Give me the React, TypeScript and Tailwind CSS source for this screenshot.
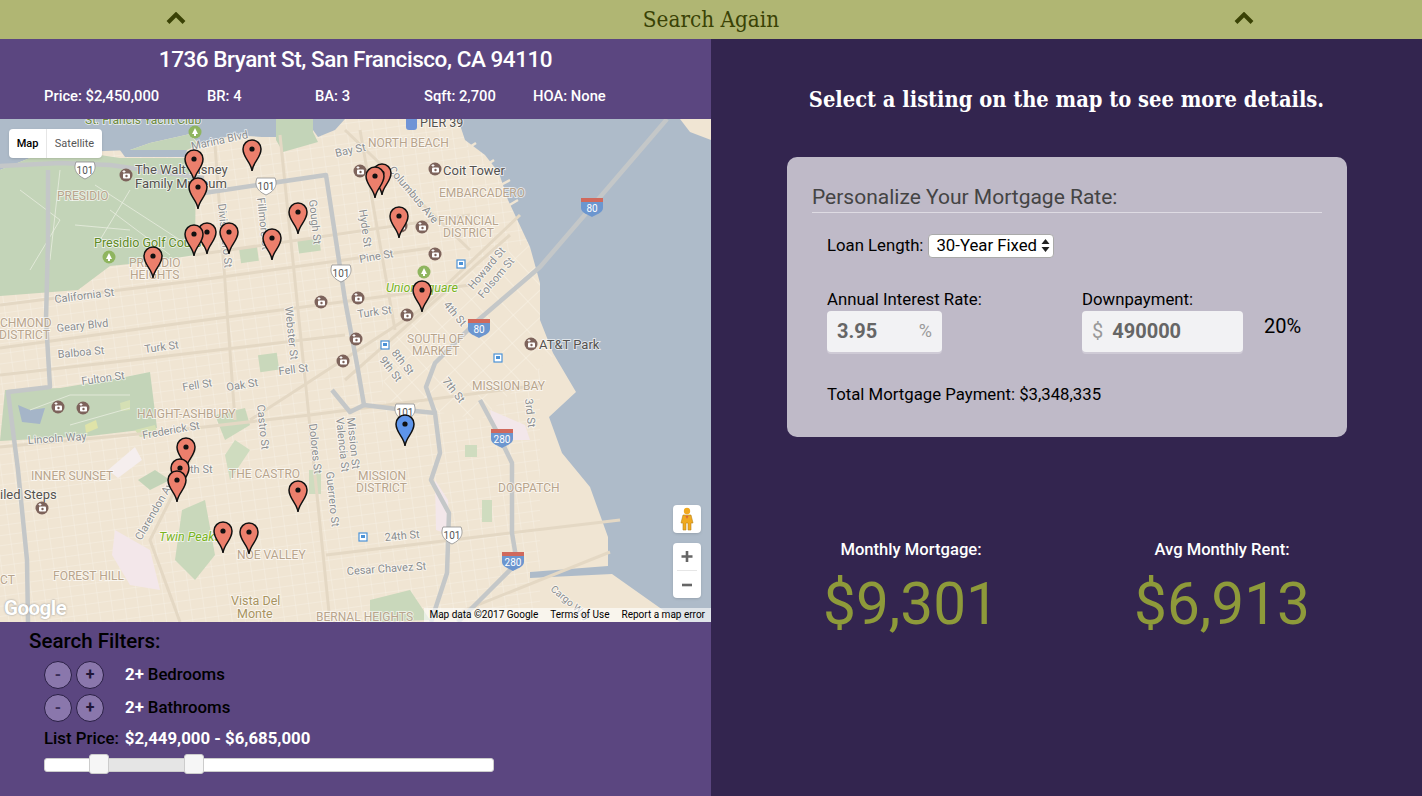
import React from "react";

type Label = [string, number, number, number?, string?, number?, string?];

const STREET = "#8b8e90";
const AREA = "#b8a48c";
const POI = "#55524f";
const GREEN = "#5f8a25";
const LIME = "#79b41e";

const labels: Label[] = [
  ["St. Francis Yacht Club", 85, 124, 0, "#6d8a3d", 12],
  ["Marina Blvd", 192, 150, -12, STREET, 11],
  ["NORTH BEACH", 368, 147, 0, AREA, 12],
  ["PIER 39", 420, 127, 0, POI, 12.5],
  ["Bay St", 336, 157, -12, STREET, 11],
  ["The Walt Disney", 135, 174, 0, POI, 13],
  ["Family Museum", 135, 188, 0, POI, 13],
  ["Coit Tower", 443, 175, 0, POI, 13],
  ["EMBARCADERO", 439, 197, 0, AREA, 12],
  ["PRESIDIO", 57, 200, 0, AREA, 12],
  ["Columbus Ave", 388, 170, 50, STREET, 11],
  ["FINANCIAL", 438, 225, 0, AREA, 12],
  ["DISTRICT", 443, 237, 0, AREA, 12],
  ["Hyde St", 359, 210, 82, STREET, 11],
  ["Divisadero St", 218, 204, 84, STREET, 11],
  ["Fillmore St", 257, 198, 84, STREET, 11],
  ["Gough St", 309, 200, 84, STREET, 11],
  ["Presidio Golf Course", 94, 247, 0, GREEN, 12.5],
  ["PRESIDIO", 129, 267, 0, AREA, 12],
  ["HEIGHTS", 130, 279, 0, AREA, 12],
  ["Pine St", 360, 263, -10, STREET, 11],
  ["Union Square", 386, 292, 0, LIME, 12.5, "italic"],
  ["California St", 55, 303, -7, STREET, 11],
  ["Howard St", 473, 290, -50, STREET, 11],
  ["Folsom St", 483, 299, -50, STREET, 11],
  ["Turk St", 358, 318, -8, STREET, 11],
  ["Turk St", 145, 353, -8, STREET, 11],
  ["4th St", 443, 305, 50, STREET, 11],
  ["Webster St", 285, 307, 84, STREET, 11],
  ["CHMOND", 0, 327, 0, AREA, 12],
  ["DISTRICT", -1, 339, 0, AREA, 12],
  ["Geary Blvd", 57, 332, -6, STREET, 11],
  ["Balboa St", 58, 358, -5, STREET, 11],
  ["Fulton St", 82, 385, -8, STREET, 11],
  ["Fell St", 183, 391, -9, STREET, 11],
  ["Oak St", 227, 391, -9, STREET, 11],
  ["Fell St", 279, 375, -7, STREET, 11],
  ["SOUTH OF", 407, 343, 0, AREA, 12],
  ["MARKET", 412, 355, 0, AREA, 12],
  ["AT&T Park", 539, 349, 0, POI, 13],
  ["8th St", 391, 353, 52, STREET, 11],
  ["9th St", 379, 360, 52, STREET, 11],
  ["7th St", 442, 381, 52, STREET, 11],
  ["MISSION BAY", 472, 390, 0, AREA, 12],
  ["HAIGHT-ASHBURY", 137, 418, 0, AREA, 12],
  ["Castro St", 257, 405, 84, STREET, 11],
  ["Dolores St", 309, 424, 84, STREET, 11],
  ["Valencia St", 336, 418, 84, STREET, 11],
  ["Mission St", 347, 418, 84, STREET, 11],
  ["3rd St", 525, 399, 84, STREET, 11],
  ["Frederick St", 143, 439, -10, STREET, 11],
  ["Lincoln Way", 28, 444, -4, STREET, 11],
  ["INNER SUNSET", 31, 480, 0, AREA, 12],
  ["th St", 190, 473, 0, STREET, 11],
  ["THE CASTRO", 229, 478, 0, AREA, 12],
  ["MISSION", 358, 480, 0, AREA, 12],
  ["DISTRICT", 356, 492, 0, AREA, 12],
  ["DOGPATCH", 498, 492, 0, AREA, 12],
  ["Guerrero St", 326, 472, 84, STREET, 11],
  ["iled Steps", 0, 499, 0, POI, 13],
  ["Clarendon Ave", 141, 541, -60, STREET, 11],
  ["Twin Peaks", 159, 541, 0, LIME, 12.5, "italic"],
  ["NOE VALLEY", 237, 559, 0, AREA, 12],
  ["24th St", 385, 541, -5, STREET, 11],
  ["FOREST HILL", 53, 580, 0, AREA, 12],
  ["CT", 0, 584, 0, AREA, 12],
  ["Cesar Chavez St", 347, 575, -4, STREET, 11],
  ["Vista Del", 231, 605, 0, "#a8935f", 12.5],
  ["Monte", 237, 618, 0, "#a8935f", 12.5],
  ["Cargo Way", 550, 590, 40, STREET, 10],
  ["BERNAL HEIGHTS", 316, 621, 0, AREA, 12],
];

const highways = [
  "M0 166 L60 163 L110 165 L160 172 L204 178",
  "M204 193 L326 175 L345 300 L358 370 L364 405 L405 410 L435 413 L440 453 L431 480 L449 513 L447 573 L431 622",
  "M48 170 L48 240 L46 320 L50 387 L8 392 L18 470 L27 560 L28 622",
  "M667 119 L540 267 L476 322 L435 363 L426 387 L435 413",
  "M480 400 L496 430 L512 463 L512 533 L517 563 L490 590 L458 622",
  "M332 390 L350 412 L364 405",
];

const arteries = [
  "M0 348 L190 322 L470 285",
  "M0 305 L200 280 L430 248",
  "M0 375 L150 358 L345 335",
  "M195 255 L470 215",
  "M215 145 L235 420",
  "M280 135 L330 622",
  "M360 130 L395 330",
  "M310 415 L540 385",
  "M0 447 L160 432 L310 415",
  "M326 555 L620 520",
  "M440 620 L610 552",
  "M250 420 L420 310 L520 215",
  "M195 450 L150 540 L180 622",
  "M345 380 L510 235",
  "M345 130 L470 250",
];

const shields: [string, number, number][] = [
  ["101", 85, 170],
  ["101", 266, 186],
  ["101", 341, 273],
  ["101", 405, 412],
  ["101", 452, 535],
];
const interstates: [string, number, number][] = [
  ["80", 592, 206],
  ["80", 479, 327],
  ["280", 502, 437],
  ["280", 513, 560],
];

const pois: [number, number][] = [
  [126, 175], [360, 171], [435, 169], [422, 227], [401, 226], [435, 254], [321, 302], [358, 298],
  [407, 315], [356, 339], [343, 361], [531, 344], [58, 407], [83, 408], [42, 508],
];
const greenPois: [number, number][] = [[195, 132], [109, 257], [424, 272]];
const transit: [number, number][] = [[461, 264], [385, 345], [498, 358], [363, 537]];

const pins: [number, number][] = [
  [252, 171], [194, 181], [198, 209], [382, 195], [375, 198], [298, 234], [399, 238], [207, 254], [194, 256],
  [229, 254], [272, 260], [153, 278], [422, 312], [186, 469], [180, 490], [177, 502], [298, 512], [223, 553], [249, 554],
];

function Pin({ x, y, fill = "#ec7f6c" }: { x: number; y: number; fill?: string }) {
  return (
    <g transform={`translate(${x} ${y})`}>
      <path
        d="M0 0 C-0.8 -9 -9 -13 -9 -22 A9 9 0 1 1 9 -22 C9 -13 0.8 -9 0 0 Z"
        fill={fill}
        stroke="#111"
        strokeWidth="1.5"
      />
      <circle cx="0" cy="-22" r="2.6" fill="#111" />
    </g>
  );
}

function SfMap() {
  return (
    <svg width="711" height="503" viewBox="0 119 711 503" className="block" fontFamily="Roboto, sans-serif">
      <defs>
        <pattern id="blocks" width="13" height="10" patternUnits="userSpaceOnUse" patternTransform="rotate(-8)">
          <path d="M0 0H13M0 0V10" stroke="#f9f3e8" strokeWidth="0.8" fill="none" />
        </pattern>
        <pattern id="soma" width="20" height="20" patternUnits="userSpaceOnUse" patternTransform="rotate(-43)">
          <path d="M0 0H20M0 0V20" stroke="#f9f3e8" strokeWidth="1" fill="none" />
        </pattern>
        <clipPath id="somaClip">
          <path d="M400 310 L530 240 L560 350 L480 420 L380 400 Z" />
        </clipPath>
      </defs>
      <rect x="0" y="119" width="711" height="503" fill="#f0e5d3" />
      <rect x="0" y="119" width="540" height="503" fill="url(#blocks)" />
      <rect x="0" y="119" width="711" height="503" fill="#f0e5d3" clipPath="url(#somaClip)" />
      <rect x="0" y="119" width="711" height="503" fill="url(#soma)" clipPath="url(#somaClip)" />

      {/* bay */}
      <path
        d="M458 119 L465 140 L485 155 L499 173 L508 200 L530 247 L540 283 L540 320 L553 353 L576 392 L549 417 L562 453 L590 487 L608 537 L608 566 L530 572 L530 578 L612 574 L653 603 L680 622 L711 622 L711 119 Z"
        fill="#aebbc9"
      />
      <path d="M0 119 H345 L335 130 L318 137 L313 130 V119 H276 V137 L262 137 L232 135 L200 145 L190 134 L150 143 L130 150 L80 152 L30 158 L0 170 Z" fill="#aebbc9" />
      <path d="M120 150 H187 L185 157 H125 Z" fill="#aebbc9" />
      <path d="M465 150 L476 143 M482 168 L494 160 M497 187 L510 180 M506 207 L518 200" stroke="#f0e5d3" strokeWidth="2.5" />
      <path d="M680 119 L711 119 L711 140 L690 132 Z" fill="#f0e5d3" />

      {/* parks */}
      <path d="M0 170 L30 158 L80 152 L120 158 L187 158 L196 150 L195 255 L150 262 L110 266 L78 290 L0 296 Z" fill="#c3d4b8" />
      <path d="M130 150 L150 143 L190 134 L198 145 L187 150 Z" fill="#c3d4b8" />
      <path d="M276 119 H313 V132 L318 142 L283 152 L276 140 Z" fill="#c3d4b8" />
      <path d="M5 390 L60 388 L120 378 L150 372 L157 428 L90 436 L0 441 Z" fill="#c3d4b8" />
      <path d="M18 405 L30 410 L45 408 L40 424 L22 422 Z" fill="#a5b5c8" />
      <path d="M85 425 L96 420 L98 428 L86 433 Z" fill="#dfe3a8" />
      <path d="M120 403 L130 400 L130 410 L121 411 Z" fill="#d5e0b4" />
      <path d="M135 430 L155 425 L158 435 L140 437 Z" fill="#d5e0b4" />
      <path d="M138 480 L155 470 L170 480 L150 490 Z" fill="#c3d4b8" />
      <path d="M215 415 L245 408 L250 425 L225 440 Z" fill="#c9d8bb" />
      <path d="M182 510 L205 500 L215 555 L195 580 L175 560 Z" fill="#c9d8bb" />
      <path d="M230 480 L250 450 L235 440 L225 455 Z" fill="#cfdcbf" />
      <path d="M370 600 L410 590 L430 620 L370 622 Z" fill="#c9d8bb" />
      <rect x="259" y="354" width="19" height="17" fill="#c9d8bb" transform="rotate(-8 268 362)" />
      <rect x="309" y="470" width="12" height="24" fill="#cfdcbf" />
      <rect x="465" y="445" width="12" height="12" fill="#cfdcbf" />
      <rect x="482" y="500" width="10" height="22" fill="#cfdcbf" />
      <rect x="298" y="238" width="22" height="14" fill="#c9d8bb" transform="rotate(-8 309 245)" />
      <rect x="240" y="248" width="18" height="14" fill="#c9d8bb" transform="rotate(-8 249 255)" />
      <path d="M115 530 L150 550 L160 590 L130 585 L112 555 Z" fill="#f3e7ea" />
      <path d="M108 470 L135 447 L142 460 L118 478 Z" fill="#f5eeee" />
      <path d="M490 410 L525 425 L530 440 L495 440 Z" fill="#f3e7ea" />
      <path d="M435 480 L448 500 L450 535 L436 530 Z" fill="#f3e7ea" />

      {/* presidio trails */}
      <g stroke="#e8eee0" strokeWidth="0.8" fill="none">
        <path d="M20 190 L60 220 L30 270 M60 170 L50 260 M95 185 L180 240 M110 210 L170 255 M130 190 L100 240 M75 225 L130 230" />
        <path d="M30 410 L70 395 L130 395 M70 425 L130 408" />
      </g>

      {arteries.map((d) => (
        <path key={d} d={d} stroke="#e4d8c4" strokeWidth="3" fill="none" />
      ))}
      {highways.map((d) => (
        <path key={d} d={d} stroke="#c4c7c8" strokeWidth="4.5" fill="none" strokeLinejoin="round" />
      ))}

      {labels.map(([t, x, y, rot = 0, color = STREET, size = 11, style]) => (
        <text
          key={`${t}${x}${y}`}
          x={x}
          y={y}
          fill={color}
          fontSize={size}
          fontStyle={style}
          transform={rot ? `rotate(${rot} ${x} ${y})` : undefined}
          stroke="#ffffff"
          strokeOpacity="0.65"
          strokeWidth="1.8"
          paintOrder="stroke"
        >
          {t}
        </text>
      ))}

      {shields.map(([t, x, y]) => (
        <g key={`${t}${x}`}>
          <path d={`M${x - 9} ${y - 8} H${x + 9} C${x + 11} ${y - 3} ${x + 11} ${y + 4} ${x} ${y + 9} C${x - 11} ${y + 4} ${x - 11} ${y - 3} ${x - 9} ${y - 8} Z`} fill="#fff" stroke="#8d8d8d" strokeWidth="0.8" />
          <text x={x} y={y + 4} fontSize="10" textAnchor="middle" fill="#555">{t}</text>
        </g>
      ))}
      {interstates.map(([t, x, y]) => (
        <g key={`${t}${x}`}>
          <path d={`M${x - 11} ${y - 8} H${x + 11} V${y + 2} C${x + 11} ${y + 7} ${x + 3} ${y + 9} ${x} ${y + 11} C${x - 3} ${y + 9} ${x - 11} ${y + 7} ${x - 11} ${y + 2} Z`} fill="#6c96cf" />
          <rect x={x - 11} y={y - 8} width="22" height="4" fill="#d0695c" />
          <text x={x} y={y + 6} fontSize="10" textAnchor="middle" fill="#fff">{t}</text>
        </g>
      ))}

      {pois.map(([x, y]) => (
        <g key={`${x}${y}`}>
          <circle cx={x} cy={y} r="6.5" fill="#7d635b" />
          <rect x={x - 3} y={y - 1.5} width="7" height="5" rx="1" fill="#fff" />
          <circle cx={x + 0.5} cy={y + 1} r="1.2" fill="#7d635b" />
          <path d={`M${x - 3.5} ${y - 3.5} h3 M${x - 2} ${y - 5} v3`} stroke="#fff" strokeWidth="0.9" />
        </g>
      ))}
      {greenPois.map(([x, y]) => (
        <g key={`${x}${y}`}>
          <circle cx={x} cy={y} r="6.5" fill="#8fb55f" />
          <path d={`M${x} ${y - 4} L${x + 3} ${y + 2} H${x + 1} V${y + 4} H${x - 1} V${y + 2} H${x - 3} Z`} fill="#fff" />
        </g>
      ))}
      {transit.map(([x, y]) => (
        <g key={`${x}${y}`}>
          <rect x={x - 4} y={y - 4} width="8" height="8" fill="#fff" stroke="#4b92d6" strokeWidth="1.2" />
          <rect x={x - 2} y={y - 2} width="4" height="3" fill="#4b92d6" />
        </g>
      ))}
      <path d="M406 119 H417 V127 Q417 130 414 130 H409 Q406 130 406 127 Z" fill="#6f93d6" />

      {pins.map(([x, y]) => (
        <Pin key={`${x}${y}`} x={x} y={y} />
      ))}
      <Pin x={405} y={446} fill="#5e95ea" />
    </svg>
  );
}

function Chevron() {
  return (
    <svg width="20" height="13" viewBox="0 0 20 13" className="mb-[3px] block">
      <path d="M2 10.5 L10 2.5 L18 10.5" fill="none" stroke="#3a4205" strokeWidth="4" />
    </svg>
  );
}

function CountRow({ count, label }: { count: string; label: string }) {
  return (
    <div className="flex h-[33px] items-center pl-[44px]">
      <button className="flex h-7 w-7 items-center justify-center rounded-full border border-[#2a1f45] bg-[#8a77ac] text-base font-bold text-[#3a2d58]">-</button>
      <button className="ml-1 flex h-7 w-7 items-center justify-center rounded-full border border-[#2a1f45] bg-[#8a77ac] text-base font-bold text-[#1f1638]">+</button>
      <span className="ml-[21px] text-[16.8px] font-bold text-white">{count}</span>
      <span className="ml-1 text-[16.8px] font-medium text-black">{label}</span>
    </div>
  );
}

export default function App() {
  return (
    <div className="flex h-[796px] w-[1422px] flex-col overflow-hidden bg-[#33254f] font-['Roboto',sans-serif]">
      <header className="flex h-[39px] shrink-0 items-center bg-[#b0b673] text-[#3a4205]">
        <div className="flex w-[352px] justify-center">
          <Chevron />
        </div>
        <div className="flex-1 pl-[4px] text-center font-['DejaVu_Serif',serif] text-[22.3px] leading-[39px] [font-stretch:condensed]">Search Again</div>
        <div className="flex w-[356px] justify-center">
          <Chevron />
        </div>
      </header>

      <div className="flex flex-1">
        {/* Listing, map and filters */}
        <div className="flex w-[711px] flex-col bg-[#5b4680]">
          <div className="h-[80px] text-white">
            <h1 className="pt-[6px] text-center text-[22.5px] font-medium leading-[29px] tracking-[-0.45px]">1736 Bryant St, San Francisco, CA 94110</h1>
            <div className="mt-[12px] flex pl-[44px] text-[14.75px] font-medium leading-[20px]">
              <span className="w-[163px]">Price: $2,450,000</span>
              <span className="w-[108px]">BR: 4</span>
              <span className="w-[109px]">BA: 3</span>
              <span className="w-[109px]">Sqft: 2,700</span>
              <span>HOA: None</span>
            </div>
          </div>

          <div className="relative h-[503px] shrink-0 overflow-hidden">
            <SfMap />
            <div className="absolute left-[9px] top-[10px] flex h-[29px] items-center rounded-sm bg-white text-[11px] shadow-sm">
              <span className="w-[38px] border-r border-[#e6e6e6] text-center font-medium leading-[29px] text-black">Map</span>
              <span className="w-[55px] text-center leading-[29px] text-[#565656]">Satellite</span>
            </div>
            <div className="absolute left-[673px] top-[386px] flex h-7 w-7 items-center justify-center rounded-sm bg-white shadow-sm">
              <svg width="14" height="24" viewBox="0 0 14 24">
                <circle cx="7" cy="4" r="3.2" fill="#f0a91f" />
                <path d="M3 8 H11 L13 16 H11 V23 H8 V16 H6 V23 H3 V16 H1 Z" fill="#f0a91f" stroke="#b9831b" strokeWidth="0.6" />
                <path d="M5.5 9 H8.5 L7 12 Z" fill="#d9683a" />
              </svg>
            </div>
            <div className="absolute left-[673px] top-[424px] flex h-[55px] w-7 flex-col items-center rounded-sm bg-white shadow-sm">
              <svg width="12" height="27" viewBox="0 0 12 27">
                <path d="M6 8 V19 M0.5 13.5 H11.5" stroke="#666" strokeWidth="2.6" />
              </svg>
              <div className="h-px w-5 bg-[#e6e6e6]" />
              <svg width="12" height="27" viewBox="0 0 12 27">
                <path d="M1 14 H11" stroke="#666" strokeWidth="2.6" />
              </svg>
            </div>
            <span className="absolute left-[4px] top-[478px] text-[20.5px] font-bold leading-[22px] tracking-[-0.5px] text-white [text-shadow:0_0_2px_#888]">Google</span>
            <div className="absolute bottom-0 right-0 flex h-[14px] items-center gap-3 bg-white/60 pl-[5px] pr-[6px] text-[10px] leading-[14px] text-black">
              <span>Map data ©2017 Google</span>
              <span>Terms of Use</span>
              <span>Report a map error</span>
            </div>
          </div>

          <div className="flex-1">
            <h2 className="pl-[29px] pt-[7px] text-[20.5px] font-medium leading-[24px] text-black">Search Filters:</h2>
            <div className="mt-[5px]">
              <CountRow count="2+" label="Bedrooms" />
              <CountRow count="2+" label="Bathrooms" />
            </div>
            <div className="mt-[4px] flex pl-[44px] text-[16.8px] font-medium leading-[20px]">
              <span className="text-black">List Price:</span>
              <span className="ml-[6px] font-bold text-white">$2,449,000 - $6,685,000</span>
            </div>
            <div className="relative ml-[44px] mt-[10px] h-[14px] w-[450px] rounded-[3px] border border-[#ccc] bg-white">
              <div className="absolute bottom-0 left-[55px] top-0 w-[95px] bg-[#e5e5e5]" />
              <div className="absolute left-[44px] top-[-5px] h-5 w-5 rounded-[3px] border border-[#ccc] bg-[#f6f6f6]" />
              <div className="absolute left-[139px] top-[-5px] h-5 w-5 rounded-[3px] border border-[#ccc] bg-[#f6f6f6]" />
            </div>
          </div>
        </div>

        {/* Mortgage details */}
        <div className="flex-1">
          <h2 className="pt-[45px] text-center font-['DejaVu_Serif',serif] text-[21.7px] font-bold leading-[32px] text-white [font-stretch:condensed]">
            Select a listing on the map to see more details.
          </h2>

          <div className="ml-[76px] mt-[41px] h-[280px] w-[560px] rounded-[10px] bg-[#bfbac8] px-[25px] pt-[27px]">
            <h3 className="border-b border-[#dedbe3] pb-[2px] text-[21px] leading-[26px] text-[#444]">Personalize Your Mortgage Rate:</h3>
            <div className="mt-[20px] flex items-center pl-[15px] text-[16.75px] text-black">
              <span>Loan Length:</span>
              <div className="ml-[5px] flex h-[24px] w-[126px] items-center justify-between rounded-[4px] border border-[#aaa] bg-white pl-[7px] pr-[3px]">
                <span>30-Year Fixed</span>
                <svg width="9" height="15" viewBox="0 0 9 15">
                  <path d="M4.5 1 L8.5 6 H0.5 Z M4.5 14 L0.5 9 H8.5 Z" fill="#222" />
                </svg>
              </div>
            </div>
            <div className="mt-[31px] flex pl-[15px] text-[16.75px] text-black">
              <div className="w-[255px]">
                <div className="leading-[20px]">Annual Interest Rate:</div>
                <div className="mt-[2px] flex h-[41px] w-[115px] items-center justify-between rounded-[4px] bg-[#f2f2f4] pb-[2px] pl-[10px] pr-[10px] shadow-[0_2px_0_#cfcbd6]">
                  <span className="text-[20px] font-bold text-[#666]">3.95</span>
                  <span className="text-[18px] text-[#999]">%</span>
                </div>
              </div>
              <div>
                <div className="leading-[20px]">Downpayment:</div>
                <div className="mt-[2px] flex h-[41px] w-[161px] items-center rounded-[4px] bg-[#f2f2f4] pb-[2px] pl-[10px] shadow-[0_2px_0_#cfcbd6]">
                  <span className="text-[20px] text-[#999]">$</span>
                  <span className="ml-[9px] text-[20px] font-bold text-[#666]">490000</span>
                </div>
              </div>
              <span className="ml-[21px] mt-[25px] text-[20px] leading-[24px]">20%</span>
            </div>
            <div className="mt-[32px] pl-[15px] text-[16.75px] leading-[20px] text-black">Total Mortgage Payment: $3,348,335</div>
          </div>

          <div className="mt-[102px] flex">
            <div className="ml-[60px] w-[280px] text-center">
              <div className="text-[16.6px] font-medium leading-[22px] text-white">Monthly Mortgage:</div>
              <div className="mt-[7px] text-[58.5px] leading-[72px] text-[#8e9a3a]">$9,301</div>
            </div>
            <div className="ml-[31px] w-[280px] text-center">
              <div className="text-[16.6px] font-medium leading-[22px] text-white">Avg Monthly Rent:</div>
              <div className="mt-[7px] text-[58.5px] leading-[72px] text-[#8e9a3a]">$6,913</div>
            </div>
          </div>
        </div>
      </div>
    </div>
  );
}
